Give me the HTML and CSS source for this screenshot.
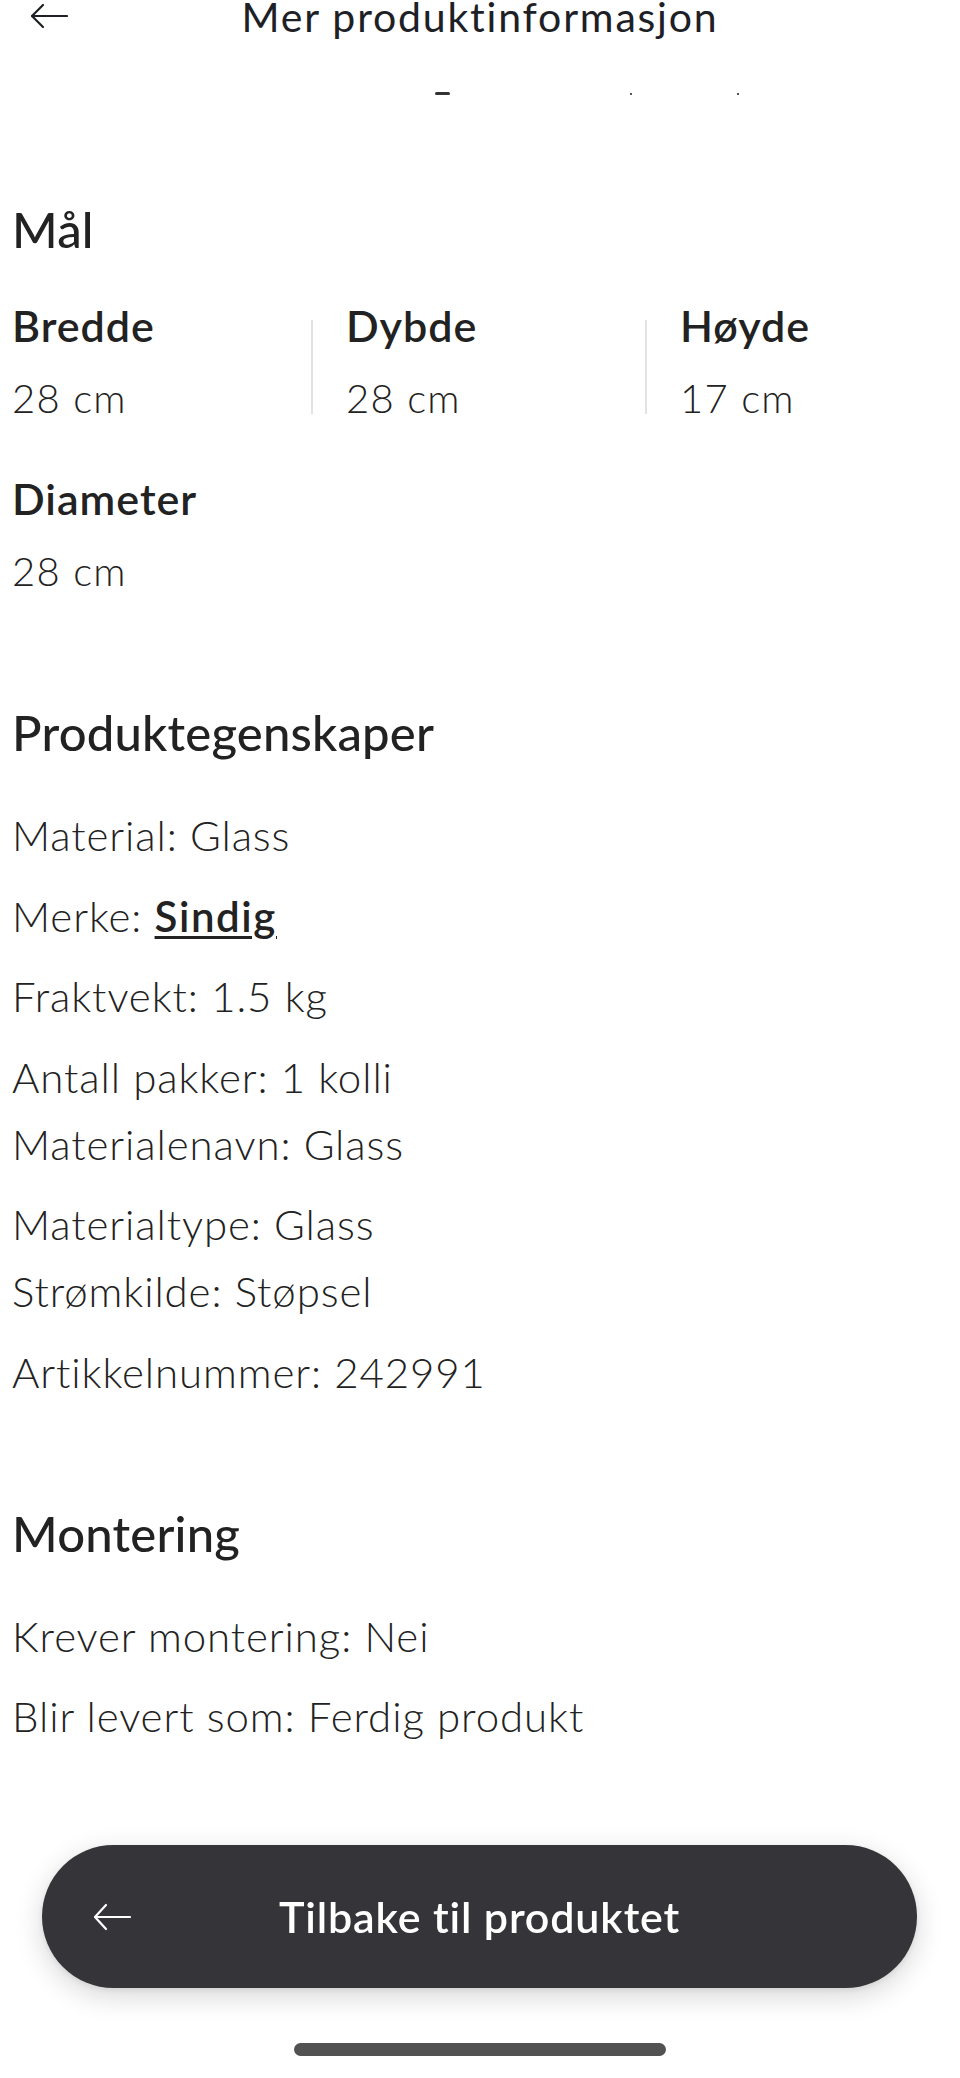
FILE: index.html
```html
<!DOCTYPE html>
<html lang="no">
<head>
<meta charset="utf-8">
<title>Mer produktinformasjon</title>
<link rel="stylesheet" href="styles.css">
</head>
<body>
<header class="topbar">
  <span class="back" aria-label="Tilbake">
    <svg width="38" height="26" viewBox="0 0 38 26" fill="none" stroke="#1d2025" stroke-width="2.2" stroke-linecap="round" stroke-linejoin="round"><path d="M37 13H2"/><path d="M13 2L2 13l11 11"/></svg>
  </span>
  <h1 class="title">Mer produktinformasjon</h1>
  <span></span>
</header>
<div class="clipped"><span class="dash"></span><span class="dot dot-a"></span><span class="dot dot-b"></span></div>
<main class="content">
  <section class="sec sec-dims">
    <h2 class="heading">Mål</h2>
    <div class="dims">
      <div class="dim"><div class="dim-label">Bredde</div><div class="dim-value">28 cm</div></div>
      <div class="dim sep"><div class="dim-label">Dybde</div><div class="dim-value">28 cm</div></div>
      <div class="dim sep"><div class="dim-label">Høyde</div><div class="dim-value">17 cm</div></div>
      <div class="dim"><div class="dim-label">Diameter</div><div class="dim-value">28 cm</div></div>
    </div>
  </section>
  <section class="sec sec-props">
    <h2 class="heading">Produktegenskaper</h2>
    <div class="list">
      <p class="item">Material: Glass</p>
      <p class="item">Merke: <a class="brand" href="#">Sindig</a></p>
      <p class="item">Fraktvekt: 1.5 kg</p>
      <p class="item">Antall pakker: 1 kolli<br>Materialenavn: Glass</p>
      <p class="item">Materialtype: Glass<br>Strømkilde: Støpsel</p>
      <p class="item">Artikkelnummer: 242991</p>
    </div>
  </section>
  <section class="sec sec-mount">
    <h2 class="heading">Montering</h2>
    <div class="list">
      <p class="item">Krever montering: Nei</p>
      <p class="item">Blir levert som: Ferdig produkt</p>
    </div>
  </section>
</main>
<div class="cta-bar">
  <button class="cta" type="button">
    <svg class="cta-arrow" width="38" height="28" viewBox="0 0 38 28" fill="none" stroke="#ffffff" stroke-width="2.2" stroke-linecap="round" stroke-linejoin="round"><path d="M37 14H2"/><path d="M13 2L2 14l11 12"/></svg>
    <span class="cta-text">Tilbake til produktet</span>
  </button>
</div>
<div class="home-indicator"></div>
</body>
</html>
```
FILE: styles.css
```css
html, body {
  margin: 0;
  padding: 0;
  background: #ffffff;
}
body {
  font-family: Lato, "Open Sans", sans-serif;
  color: #222222;
  width: 960px;
  min-height: 2078px;
}
.topbar {
  height: 88px;
  display: grid;
  grid-template-columns: 1fr auto 1fr;
  align-items: start;
  background: #ffffff;
}
.back {
  display: block;
  margin-left: 30px;
  margin-top: 3px;
  height: 26px;
}
.back svg { display: block; }
.title {
  margin: 0;
  font-size: 41px;
  line-height: 34px;
  font-weight: 400;
  color: #1d2025;
  letter-spacing: 1.8px;
  white-space: nowrap;
}
.clipped {
  height: 10px;
  display: flex;
  align-items: flex-start;
  padding-left: 435px;
  box-sizing: border-box;
}
.dash {
  display: block;
  width: 15px;
  height: 3px;
  margin-top: 4px;
  background: #333;
  border-radius: 2px;
}
.dot {
  display: block;
  width: 2px;
  height: 2px;
  margin-top: 5px;
  background: #555;
}
.dot-a { margin-left: 180px; }
.dot-b { margin-left: 105px; }

.content {
  padding-left: 12px;
}
.sec { display: flex; flex-direction: column; }
.sec-dims { padding-top: 101px; }
.sec-props { padding-top: 105px; }
.sec-mount { padding-top: 97px; }

.heading {
  margin: 0;
  font-size: 49px;
  line-height: 60px;
  font-weight: 500;
  color: #222222;
  letter-spacing: 0.2px;
}
.dims {
  margin-top: 41px;
  display: grid;
  grid-template-columns: 299px 334px 1fr;
  row-gap: 49px;
}
.dim {
  position: relative;
  display: flex;
  flex-direction: column;
  gap: 20px;
}
.dim.sep { padding-left: 35px; }
.dim.sep::before {
  content: "";
  position: absolute;
  left: 0;
  top: 20px;
  bottom: 10px;
  width: 2px;
  background: #e2e2e2;
}
.dim-label {
  font-size: 43px;
  line-height: 52px;
  font-weight: 600;
  letter-spacing: 1px;
}
.dim-value {
  font-size: 40px;
  line-height: 52px;
  font-weight: 300;
  letter-spacing: 1.3px;
}
.list {
  margin-top: 40px;
  display: flex;
  flex-direction: column;
  gap: 13.5px;
}
.item {
  margin: 0;
  font-size: 42px;
  line-height: 67px;
  font-weight: 300;
  color: #222222;
  letter-spacing: 0.9px;
}
.brand {
  color: #222222;
  font-weight: 600;
  letter-spacing: 1.6px;
  text-decoration: underline;
  text-decoration-thickness: 2.5px;
  text-underline-offset: 4px;
}

.cta-bar {
  position: fixed;
  left: 42px;
  right: 43px;
  bottom: 90px;
}
.cta {
  width: 100%;
  height: 143px;
  border: none;
  border-radius: 72px;
  background: #353438;
  box-shadow: 0 8px 28px rgba(0, 0, 0, 0.16), 0 2px 6px rgba(0, 0, 0, 0.08);
  display: flex;
  align-items: center;
  justify-content: center;
  position: relative;
  padding: 0;
  cursor: pointer;
}
.cta-arrow {
  position: absolute;
  left: 51px;
  top: 58px;
}
.cta-text {
  font-family: Lato, "Open Sans", sans-serif;
  font-size: 43px;
  line-height: 52px;
  font-weight: 600;
  color: #ffffff;
  letter-spacing: 0.85px;
}
.home-indicator {
  position: fixed;
  left: 294px;
  width: 372px;
  bottom: 22px;
  height: 13px;
  border-radius: 7px;
  background: #525252;
}
```
